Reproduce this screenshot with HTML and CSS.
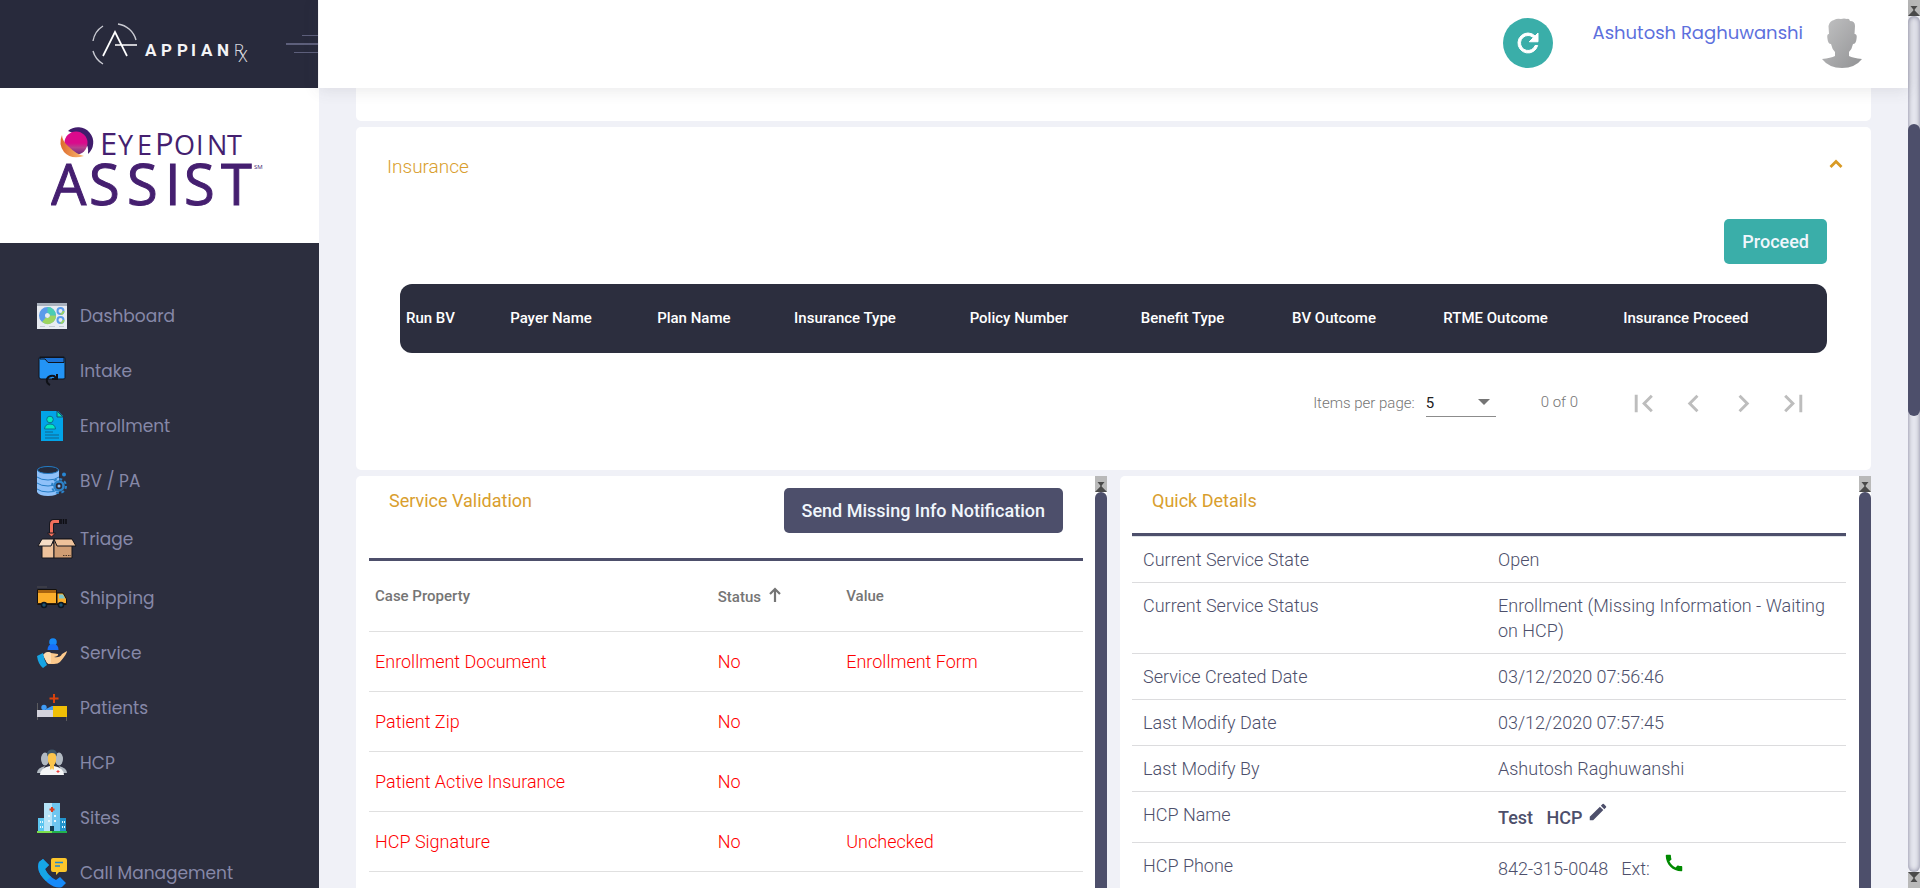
FILE: index.html
```html
<!DOCTYPE html>
<html lang="en">
<head>
<meta charset="utf-8">
<title>Appian Rx - Insurance</title>
<link rel="stylesheet" href="styles.css">
</head>
<body>
<div class="app">
  <aside class="sidebar">
    <div class="brand">
      <svg class="brand-logo" viewBox="0 0 160 48" role="img" aria-label="AppianRx">
        <g fill="none" stroke="#c9cad2" stroke-width="1.4">
          <path d="M3 21A22 22 0 0 1 13 6M28 4A22 22 0 0 1 46 20M3 31A22 22 0 0 0 13 44"/>
          <path d="M13 36L25 12L37 36M25 25H47" stroke="#fff" stroke-width="1.7"/>
        </g>
        <text class="logo-word" y="36" x="55 71 87 101 111 127">APPIAN</text>
        <text class="logo-rx" y="36" x="144">R</text>
        <text class="logo-rx" y="42" x="148">X</text>
      </svg>
      <button class="menu-toggle" type="button" aria-label="Toggle menu"><span></span><span></span><span></span></button>
    </div>
    <div class="client">
      <svg class="client-logo" viewBox="0 -10 216 108" role="img" aria-label="EyePoint Assist">
        <defs>
          <linearGradient id="ball" x1="0" y1="0" x2="0" y2="1"><stop offset=".5" stop-color="#da0a8c"/><stop offset=".7" stop-color="#b8408e"/><stop offset="1" stop-color="#6a2a78"/></linearGradient>
          <linearGradient id="flame"><stop offset="0" stop-color="#dc6a2c"/><stop offset="1" stop-color="#fdbd74"/></linearGradient>
        </defs>
        <path d="M17 5A15 15 0 0 1 37 28Q39 12 17 5Z" fill="#401c6c"/>
        <circle cx="25" cy="17" r="11.500" fill="url(#ball)"/>
        <path d="M11 9Q7 18 13 26Q20 34 33 30Q25 28 18 21Q11 15 11 9Z" fill="url(#flame)"/>
        <g fill="#451f70">
          <text class="eye-small" y="29" x="49 67 86 104 123 145 156 176"><tspan class="eye-cap">E</tspan>YE<tspan class="eye-cap">P</tspan>OINT</text>
          <text class="assist" y="79" x="0 38 76 114 133 170">ASSIST</text>
          <text class="mark" y="43" x="203">SM</text>
        </g>
      </svg>
    </div>
    <nav class="nav">
      <a class="nav-item" href="#dashboard"><svg class="nav-icon" viewBox="0 0 30 30"><path fill="#e8ebf1" d="M0 2h30v26H0z"/><path fill="#a9b1bd" d="M0 2h30v3H0z"/><circle cx="10.500" cy="14.500" r="5.500" fill="none" stroke="#5a9bea" stroke-width="6"/><path d="M10.500 9a5.500 5.500 0 0 1 5.500 5.500" fill="none" stroke="#4bcdb2" stroke-width="6"/><path d="M16 14.500a5.500 5.500 0 0 1-9 4.300" fill="none" stroke="#9dd55f" stroke-width="6"/><g fill="none" stroke="#5a9bea" stroke-width="2"><circle cx="23.500" cy="10" r="3"/><circle cx="23.500" cy="19" r="3"/></g><path d="M26.500 10a3 3 0 0 1-3 3M26.500 19a3 3 0 0 1-3 3" fill="none" stroke="#9dd55f" stroke-width="2"/><path d="M3 25.500h5M12 25.500h6M22 25.500h5" stroke="#c3cad3"/></svg><span>Dashboard</span></a>
      <a class="nav-item" href="#intake"><svg class="nav-icon" viewBox="0 0 30 30"><path d="M3 1h24q1 0 1 2v19q0 1-2 1H4q-2 0-2-2V3q0-2 1-2z" fill="#2394f5" stroke="#10141d"/><path d="M3 1.500h24v5H11L8 3H3z" fill="#1b70d2" stroke="#10141d"/><path d="M13 29q-4-2-3-6 2-4 7-3l2 2M20 18v5h-5" fill="none" stroke="#0f1117" stroke-width="2"/></svg><span>Intake</span></a>
      <a class="nav-item" href="#enrollment"><svg class="nav-icon" viewBox="0 0 30 30"><path d="M4 0h17l5 5v25H4z" fill="#02a4e8"/><path d="M20 0v6h6z" fill="#08e2b0" stroke="#155273"/><g fill="#07e8bd" stroke="#0b6f92"><circle cx="13" cy="8.500" r="3.300"/><path d="M7.500 18q.500-5 5.500-5t5.500 5z"/></g><path d="M8 21h8M8 24h14M8 27h14" stroke="#10658e"/></svg><span>Enrollment</span></a>
      <a class="nav-item" href="#bvpa"><svg class="nav-icon" viewBox="0 0 30 30"><path d="M0 4v22q2 4 11 4t11-4V4z" fill="#8fc1f9"/><ellipse cx="11" cy="4" rx="10.500" ry="3.500" fill="#252b3c" stroke="#247cc5"/><path d="M0 11q4 3 11 3t11-3M0 17q4 3 11 3t11-3M0 23q4 3 11 3t9-2" fill="none" stroke="#247cc5"/><circle cx="22" cy="20" r="7" fill="none" stroke="#2d82c8" stroke-width="2" stroke-dasharray="3 2.500"/><circle cx="22" cy="20" r="4.500" fill="#2c2e3e" stroke="#2d82c8" stroke-width="2.500"/><circle cx="22" cy="20" r="1.500" fill="#8fc1f9"/><circle cx="27" cy="8.500" r="2" fill="#2787d5"/></svg><span>BV / PA</span></a>
      <a class="nav-item nav-item-tall" href="#triage"><svg class="nav-icon nav-icon-big" viewBox="0 0 40 40"><path d="M23 2.500h-6q-2.500 0-2.500 3V15" fill="none" stroke="#171820" stroke-width="5"/><path d="M22 2.500h-5q-2.500 0-2.500 3V15" fill="none" stroke="#f1705c" stroke-width="3"/><path d="M10.500 14h8l-4 4z" fill="#f1705c" stroke="#171820"/><path d="M24 0v5M26.500 0v5M29 0v5" stroke="#0c0d12" stroke-width="1.500"/><path d="M5 24h12v15H5z" fill="#eec29b" stroke="#15151a"/><path d="M17 20h18v19H17z" fill="#cf9d74" stroke="#15151a"/><path d="M5 20h12l-3 7H1z" fill="#f5dcc5" stroke="#15151a"/><path d="M17 20h18l4 7H20z" fill="#eec29b" stroke="#15151a"/><path d="M26 36.500h8" stroke="#4a3728" stroke-dasharray="1.500 1"/></svg><span>Triage</span></a>
      <a class="nav-item" href="#shipping"><svg class="nav-icon" viewBox="0 0 30 30"><path d="M0 4h10" stroke="#4b4b50"/><path d="M.5 6.500h19v15H.5z" fill="#fbae2b" stroke="#14110d"/><path d="M1 7h18v3H1z" fill="#a9640f"/><path d="M20 10h6l3.500 6v5.500H20z" fill="#fbae2b" stroke="#14110d"/><path d="M22 11.500h4l2 4h-6z" fill="#7cc6cb"/><path d="M0 20.500h30" stroke="#33200b"/><g fill="#1f5371" stroke="#0c1620" stroke-width="1.500"><circle cx="7" cy="22" r="2.500"/><circle cx="24" cy="22" r="2.500"/></g></svg><span>Shipping</span></a>
      <a class="nav-item" href="#service"><svg class="nav-icon" viewBox="0 0 30 30"><circle cx="16" cy="4" r="3.800" fill="#168af8"/><path d="M10.500 12q0-6 5.500-6t5.500 6z" fill="#176ff5"/><path d="M6 17q4-5 8-2l7 1q1 2-4 3 6 1 8-3l5-3q0 3-7 11-2 2-6 2H11z" fill="#fcc98c"/><path d="M6 17q4-5 8-2v10h-4z" fill="#fddcb0"/><path d="M0 18l6-3q1 7 4 12l-4 3q-5-4-6-12z" fill="#17a4e2"/></svg><span>Service</span></a>
      <a class="nav-item" href="#patients"><svg class="nav-icon" viewBox="0 0 30 30"><path d="M17 1v9M12.500 5.500h9" stroke="#d9420c" stroke-width="2"/><path d="M.5 10v17M29.500 24v4" stroke="#5b5b5f"/><circle cx="7" cy="14.500" r="2.700" fill="#3f9cf7"/><path d="M9 16l6-3h2v4H9z" fill="#3f9cf7"/><path d="M0 17h16v7H0z" fill="#d3d2dc"/><path d="M16 13h14v11H16z" fill="#f0bf06"/></svg><span>Patients</span></a>
      <a class="nav-item" href="#hcp"><svg class="nav-icon" viewBox="0 0 30 30"><g fill="#b2bac2"><ellipse cx="8" cy="11" rx="4" ry="6.500"/><ellipse cx="22" cy="11" rx="4" ry="6.500"/><path d="M0 25q0-5 8-7l-3 7zM30 25q0-5-8-7l3 7z"/></g><ellipse cx="15" cy="6" rx="5" ry="4.500" fill="#3e5668"/><path d="M3 27q0-7 10-9h4q10 2 10 9z" fill="#f4f5f6"/><path d="M11 8q0-3 4-3t4 3v5q-1 4-2 4v4l-1 1-1-2-1 2-1-1v-4q-1 0-2-4z" fill="#fbc54d"/><path d="M21 22v3M19.500 23.500h3" stroke="#ef3f3c"/></svg><span>HCP</span></a>
      <a class="nav-item" href="#sites"><svg class="nav-icon" viewBox="0 0 30 30"><path d="M1 15h7v13H1z" fill="#5cc5ef"/><path d="M22 15h7v13h-7z" fill="#2293cc"/><path d="M7 0h8v28H7z" fill="#b5e3f8"/><path d="M15 0h8v28h-8z" fill="#6ec6f0"/><path d="M15 4v5M12.500 6.500h5" stroke="#db3d1e" stroke-width="2"/><path d="M11 13h2M17 13h2M11 18h2M17 18h2M3 19h1M5 19h1M25 19h1M27 19h1M3 24h1M5 24h1M25 24h1M27 24h1" stroke="#e6f6fd" stroke-width="2"/><path d="M13 23h4v5h-4z" fill="#143b51"/><path d="M0 28h15v2H0z" fill="#7be04b"/><path d="M15 28h15v2H15z" fill="#22b14c"/></svg><span>Sites</span></a>
      <a class="nav-item" href="#calls"><svg class="nav-icon" viewBox="0 0 30 30"><path d="M2 4L6 1l6 6-4 4q3 7 11 11l4-3 6 6-4 4q-6 2-14-4Q-2 14 2 4z" fill="#178af8"/><path d="M2 4L6 1l6 6-4 4q2 5 6 8l-5 4Q-1 14 2 4z" fill="#16a6e6"/><path d="M16 0h12q2 0 2 2v10q0 2-2 2h-6l-3 3v-3h-3q-2 0-2-2V2q0-2 2-2z" fill="#fcc62b"/><path d="M18 4.500h8M18 8h5" stroke="#1c86d6" stroke-width="1.400"/></svg><span>Call Management</span></a>
    </nav>
  </aside>

  <div class="page">
    <header class="topbar">
      <button class="refresh" type="button" aria-label="Refresh"><svg viewBox="0 0 24 24"><path fill="#fff" stroke="#fff" stroke-width=".8" d="M17.650 6.350A7.960 7.960 0 0 0 12 4a8 8 0 1 0 7.730 10h-2.080A6 6 0 1 1 12 6c1.660 0 3.140.69 4.220 1.780L13 11h7V4z"/></svg></button>
      <a class="user" href="#profile">Ashutosh Raghuwanshi</a>
      <svg class="avatar" viewBox="0 0 40 50" role="img" aria-label="User photo"><defs><linearGradient id="person" x1="0" y1="0" x2="1" y2="1"><stop offset="0" stop-color="#c2c2c3"/><stop offset="1" stop-color="#919294"/></linearGradient></defs><path fill="url(#person)" d="M12 2q3-2 7-1 3-1 6 0 2-1 3 2 5 0 5 5l-.5 8q3 0 2 5-.5 5-3.500 5-1 5-4 8v4q4 2 13 3-7 9-20 9T0 41q9-1 13-3v-4q-3-3-4-8-3 0-3.500-5-1-5 1.500-5L6.500 8q1-5 5.500-6z"/></svg>
    </header>

    <main class="content">
      <section class="card card-previous"></section>

      <section class="card insurance">
        <div class="insurance-head">
          <h2 class="insurance-title">Insurance</h2>
          <button class="collapse" type="button" aria-label="Collapse"><svg viewBox="0 0 14 10"><path d="M1.500 8L7 2.500L12.500 8" fill="none" stroke="#d99a24" stroke-width="2.800"/></svg></button>
        </div>
        <div class="actions"><button class="btn btn-teal" type="button">Proceed</button></div>
        <table class="plans">
          <colgroup><col class="w-run"><col class="w-payer"><col class="w-plan"><col class="w-type"><col class="w-policy"><col class="w-benefit"><col class="w-bv"><col class="w-rtme"><col></colgroup>
          <thead><tr><th>Run BV</th><th>Payer Name</th><th>Plan Name</th><th>Insurance Type</th><th>Policy Number</th><th>Benefit Type</th><th>BV Outcome</th><th>RTME Outcome</th><th>Insurance Proceed</th></tr></thead>
        </table>
        <div class="paginator">
          <label for="page-size">Items per page:</label>
          <span class="select-wrap"><select id="page-size"><option>5</option><option>10</option></select><i class="caret"></i></span>
          <span class="range">0 of 0</span>
          <button class="pager" type="button" aria-label="First page" disabled><svg viewBox="0 0 24 24"><path d="M18.410 16.590L13.820 12l4.590-4.590L17 6l-6 6 6 6zM6 6h2v12H6z"/></svg></button>
          <button class="pager" type="button" aria-label="Previous page" disabled><svg viewBox="0 0 24 24"><path d="M15.410 7.410L14 6l-6 6 6 6 1.410-1.410L10.830 12z"/></svg></button>
          <button class="pager" type="button" aria-label="Next page" disabled><svg viewBox="0 0 24 24"><path d="M10 6L8.590 7.410 13.170 12l-4.580 4.590L10 18l6-6z"/></svg></button>
          <button class="pager" type="button" aria-label="Last page" disabled><svg viewBox="0 0 24 24"><path d="M5.590 7.410L10.180 12l-4.590 4.590L7 18l6-6-6-6zM16 6h2v12h-2z"/></svg></button>
        </div>
      </section>

      <div class="panels">
        <section class="panel">
          <div class="panel-body">
            <div class="panel-head panel-head-tall"><h2>Service Validation</h2><button class="btn btn-slate" type="button">Send Missing Info Notification</button></div>
            <table class="validation">
              <colgroup><col class="w-property"><col class="w-status"><col></colgroup>
              <thead><tr><th>Case Property</th><th>Status <svg class="sort" viewBox="0 0 12 15"><path d="M6 15V2M1 7l5-5 5 5" fill="none" stroke="#757575" stroke-width="2.200"/></svg></th><th>Value</th></tr></thead>
              <tbody>
                <tr><td>Enrollment Document</td><td>No</td><td>Enrollment Form</td></tr>
                <tr><td>Patient Zip</td><td>No</td><td></td></tr>
                <tr><td>Patient Active Insurance</td><td>No</td><td></td></tr>
                <tr><td>HCP Signature</td><td>No</td><td>Unchecked</td></tr>
              </tbody>
            </table>
          </div>
          <div class="scroll" aria-hidden="true"><svg class="scroll-btn" viewBox="0 0 12 16"><path d="M2.500 6h7L6.700 9.500v1L12 16H0l5.300-5.500v-1z"/></svg><div class="thumb"></div></div>
        </section>

        <section class="panel">
          <div class="panel-body panel-body-details">
            <div class="panel-head"><h2>Quick Details</h2></div>
            <table class="details">
              <colgroup><col class="w-half"><col></colgroup>
              <tbody>
                <tr><th>Current Service State</th><td>Open</td></tr>
                <tr><th>Current Service Status</th><td>Enrollment (Missing Information - Waiting on HCP)</td></tr>
                <tr><th>Service Created Date</th><td>03/12/2020 07:56:46</td></tr>
                <tr><th>Last Modify Date</th><td>03/12/2020 07:57:45</td></tr>
                <tr><th>Last Modify By</th><td>Ashutosh Raghuwanshi</td></tr>
                <tr><th>HCP Name</th><td><div class="with-icon"><b>Test &nbsp; HCP</b><svg viewBox="0 0 24 24"><path fill="#4d4f6b" d="M3 17.250V21h3.750L17.810 9.940l-3.750-3.750L3 17.250zM20.710 7.040a1 1 0 0 0 0-1.410l-2.340-2.340a1 1 0 0 0-1.410 0l-1.830 1.830 3.750 3.750 1.830-1.830z"/></svg></div></td></tr>
                <tr><th>HCP Phone</th><td><div class="with-icon with-phone"><span>842-315-0048 &nbsp; Ext:</span><svg viewBox="0 0 24 24"><path fill="#008a00" d="M20.010 15.380c-1.230 0-2.420-.2-3.530-.56a.98.98 0 0 0-1.010.240l-1.570 1.970c-2.830-1.350-5.480-3.900-6.890-6.830l1.950-1.660c.270-.28.350-.67.240-1.020-.37-1.110-.56-2.300-.56-3.530 0-.54-.45-.99-.99-.99H4.190C3.650 3 3 3.240 3 3.990 3 13.280 10.730 21 20.010 21c.71 0 .99-.63.99-1.180v-3.450c0-.54-.45-.99-.99-.99z"/></svg></div></td></tr>
              </tbody>
            </table>
          </div>
          <div class="scroll" aria-hidden="true"><svg class="scroll-btn" viewBox="0 0 12 16"><path d="M2.500 6h7L6.700 9.500v1L12 16H0l5.300-5.500v-1z"/></svg><div class="thumb"></div></div>
        </section>
      </div>
    </main>
  </div>

  <div class="scroll scroll-page" aria-hidden="true">
    <svg class="scroll-btn" viewBox="0 0 12 16"><path d="M2.500 6h7L6.700 9.500v1L12 16H0l5.300-5.500v-1z"/></svg>
    <div class="track"><div class="thumb"></div></div>
    <svg class="scroll-btn" viewBox="0 0 12 16"><path d="M2.500 10h7L6.700 6.500v-1L12 0H0l5.300 5.500v1z"/></svg>
  </div>
</div>
</body>
</html>
```
FILE: styles.css
```css
* { box-sizing: border-box; }
html, body { margin: 0; height: 100%; overflow: hidden; }
body { font-family: Roboto, "Liberation Sans", sans-serif; font-size: 18px; font-weight: 300; color: #4d4f6b; background: #f0f1f7; }
h2 { margin: 0; font: inherit; color: #d99e2d; }
button { font: inherit; border: 0; padding: 0; background: none; cursor: pointer; }
a { text-decoration: none; }
table { border-collapse: separate; border-spacing: 0; width: 100%; table-layout: fixed; text-align: left; }

.app { display: grid; grid-template-columns: 319px 1fr 12px; height: 100vh; }

/* Sidebar */
.sidebar { display: flex; flex-direction: column; min-height: 0; overflow: hidden; background: #2c2e3e; }
.brand { display: flex; flex: none; align-items: center; justify-content: space-between; height: 88px; padding-left: 90px; background: #282a3c; border-right: 1px solid #fff; }
.brand-logo { width: 160px; height: 48px; overflow: visible; }
.logo-word { font: 700 17px Roboto, sans-serif; fill: #f4f4f6; }
.logo-rx { font: 300 16px Roboto, sans-serif; fill: #d5d6dc; }
.menu-toggle { display: flex; flex-direction: column; align-items: flex-end; gap: 7px; }
.menu-toggle span { width: 16px; height: 1px; background: #5d5f7b; }
.menu-toggle span:nth-child(2) { width: 32px; height: 2px; }
.menu-toggle span:nth-child(3) { width: 24px; }
.client { flex: none; height: 155px; padding: 28px 0 0 51px; background: #fff; }
.client-logo { display: block; width: 216px; height: 108px; }
.eye-cap { font: 400 31px "Open Sans", sans-serif; }
.eye-small { font: 400 27px "Open Sans", sans-serif; }
.assist { font: 400 56px "Open Sans", sans-serif; stroke: #451f70; }
.mark { font: 400 6px "Open Sans", sans-serif; }
.nav { display: flex; flex: none; flex-direction: column; padding-top: 45px; }
.nav-item { display: grid; grid-template-columns: 43px 1fr; align-items: center; height: 55px; padding-left: 37px; font: 400 17px Poppins, Inter, sans-serif; color: #8688a8; }
.nav-item-tall { height: 62px; }
.nav-icon { width: 30px; height: 30px; }
.nav-icon-big { width: 40px; height: 40px; }

/* Top bar */
.page { display: flex; flex-direction: column; min-width: 0; min-height: 0; }
.topbar { position: relative; z-index: 1; display: flex; flex: none; justify-content: flex-end; align-items: flex-start; height: 88px; padding: 18px 46px 0 0; background: #fff; box-shadow: 0 1px 15px 1px rgba(69, 65, 78, .12); }
.refresh { display: grid; place-items: center; width: 50px; height: 50px; margin-right: 40px; border-radius: 50%; background: #3aaea9; }
.refresh svg { width: 30px; height: 30px; }
.user { margin-right: 19px; font: 400 18px/30px Poppins, Inter, sans-serif; color: #5d70dd; }
.avatar { width: 40px; height: 50px; }

/* Content */
.content { display: flex; flex: 1; flex-direction: column; gap: 6px; min-height: 0; padding: 0 37px; }
.card { flex: none; background: #fff; border-radius: 5px; }
.card-previous { height: 33px; border-radius: 0 0 5px 5px; }
.insurance { padding: 26px 44px 40px; }
.insurance-head { display: flex; justify-content: space-between; align-items: center; margin: 0 -16px 0 -13px; height: 26px; }
.insurance-title { font-size: 19px; }
.collapse { display: flex; padding-bottom: 4px; }
.collapse svg { width: 14px; height: 10px; }
.actions { display: flex; justify-content: flex-end; padding: 40px 0 20px; }
.btn { height: 45px; padding: 0 18px; border-radius: 5px; font-size: 18px; font-weight: 500; color: #f0f6fc; }
.btn-teal { background: #3aaea9; }
.btn-slate { background: #4d4f6b; }
.plans th { height: 69px; padding: 0 0 2px 6px; background: #2c2e3e; color: #fff; font-size: 15px; font-weight: 500; }
.plans th:first-child { border-radius: 12px 0 0 12px; }
.plans th:last-child { border-radius: 0 12px 12px 0; }
.w-run { width: 7.3%; }
.w-payer { width: 10.3%; }
.w-plan { width: 9.6%; }
.w-type { width: 12.3%; }
.w-policy { width: 12%; }
.w-benefit { width: 10.6%; }
.w-bv { width: 10.6%; }
.w-rtme { width: 12.6%; }
.paginator { display: flex; justify-content: flex-end; align-items: center; height: 70px; margin: 15px 9px -8px 0; font-size: 15px; color: #757575; }
.select-wrap { position: relative; width: 70px; margin: 0 45px 0 11px; border-bottom: 1px solid #8c8c8c; }
.select-wrap select { width: 100%; height: 27px; padding: 0; border: 0; background: none; appearance: none; font: 400 15px Roboto, sans-serif; color: #212121; }
.caret { position: absolute; right: 6px; top: 10px; border: 6px solid transparent; border-top-color: #757575; border-bottom: 0; pointer-events: none; }
.range { margin-right: 40px; padding-bottom: 2px; }
.pager { display: grid; place-items: center; width: 50px; height: 50px; }
.pager svg { width: 35px; height: 35px; fill: #bdbdbd; }

/* Panels */
.panels { display: grid; flex: 1; grid-template-columns: 1fr 1fr; grid-template-rows: 100%; gap: 13px; min-height: 0; }
.panel { display: flex; min-width: 0; overflow: hidden; background: #fff; border-radius: 5px 0 0 0; }
.panel-body { flex: 1; min-width: 0; padding: 0 12px 0 13px; }
.panel-body-details { padding: 0 13px 0 12px; }
.panel-head { display: flex; justify-content: space-between; align-items: flex-start; height: 60px; padding: 12px 20px 0; border-bottom: 3px solid #4d4f6b; }
.panel-head h2 { font-size: 18px; font-weight: 400; line-height: 25px; }
.panel-head-tall { height: 85px; }
.validation th { height: 71px; padding: 0 0 0 6px; border-bottom: 1px solid #e0e0e0; font-size: 15px; font-weight: 500; color: #757575; }
.validation td { height: 60px; padding: 0 0 0 6px; border-bottom: 1px solid #e0e0e0; color: #f00; }
.w-property { width: 48%; }
.w-status { width: 18%; }
.sort { width: 12px; height: 15px; margin-left: 4px; }
.details { border-top: 1px solid #dee2e6; }
.details th, .details td { padding: 10px 11px; border-bottom: 1px solid #dcdcde; font-weight: 300; line-height: 25px; vertical-align: top; }
.w-half { width: 355px; }
.with-icon { display: flex; align-items: flex-end; gap: 5px; height: 30px; padding-bottom: 2px; }
.with-icon b { font-weight: 500; }
.with-icon svg { width: 22px; height: 22px; margin-bottom: 7px; }
.with-phone { gap: 13px; }

/* Scrollbars */
.scroll { display: flex; flex: none; flex-direction: column; width: 12px; }
.scroll-btn { flex: none; width: 12px; height: 16px; background: #b9b9b9; fill: #4a4a4a; }
.thumb { flex: 1; border-radius: 6px 6px 0 0; background: #4d4f6b; }
.track { flex: 1; padding-top: 108px; border-radius: 6px; background: #e5e6ee; box-shadow: inset 0 0 5px #808098; }
.track .thumb { height: 39%; border-radius: 6px; }
```
